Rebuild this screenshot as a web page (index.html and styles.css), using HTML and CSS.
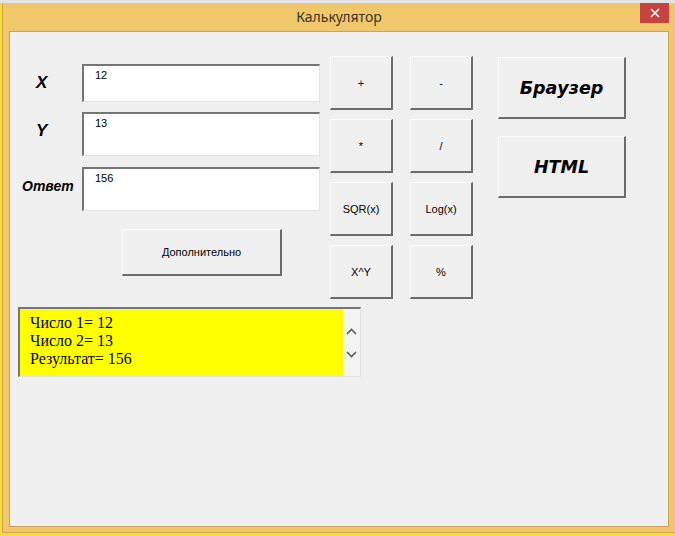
FILE: index.html
```html
<!DOCTYPE html>
<html lang="ru">
<head>
  <meta charset="UTF-8" />
  <title>Калькулятор</title>
  <link rel="stylesheet" href="styles.css">
</head>
<body>
  <div class="desk-strip"></div>
  <div class="window">
    <div class="titlebar">
      <span class="title-spacer"></span>
      <span class="title">Калькулятор</span>
      <span class="close-btn">
        <svg width="10" height="10" viewBox="0 0 10 10"><path d="M1 1 L9 9 M9 1 L1 9" stroke="#fff" stroke-width="1.6" fill="none"/></svg>
      </span>
    </div>

    <div class="client">
      <div class="top-row">
        <div class="left-panel">
          <div class="field-row row-x">
            <span class="label label-short">X</span>
            <div class="textbox">12</div>
          </div>
          <div class="field-row row-y">
            <span class="label label-short">Y</span>
            <div class="textbox">13</div>
          </div>
          <div class="field-row row-answer">
            <span class="label label-long">Ответ</span>
            <div class="textbox">156</div>
          </div>
          <button class="btn more-btn">Дополнительно</button>
        </div>

        <div class="calc-grid">
          <button class="btn">+</button>
          <button class="btn">-</button>
          <button class="btn">*</button>
          <button class="btn">/</button>
          <button class="btn">SQR(x)</button>
          <button class="btn">Log(x)</button>
          <button class="btn">X^Y</button>
          <button class="btn">%</button>
        </div>

        <div class="right-panel">
          <button class="btn big-btn">Браузер</button>
          <button class="btn big-btn">HTML</button>
        </div>
      </div>

      <div class="listbox">
        <div class="list-items">
          <div>Число 1= 12</div>
          <div>Число 2= 13</div>
          <div>Результат= 156</div>
        </div>
        <div class="scrollbar">
          <svg width="17" height="68" viewBox="0 0 17 68">
            <polyline points="4,25 8.5,20.5 13,25" stroke="#5a5a5a" stroke-width="1.6" fill="none"/>
            <polyline points="4,43 8.5,47.5 13,43" stroke="#5a5a5a" stroke-width="1.6" fill="none"/>
          </svg>
        </div>
      </div>
    </div>
  </div>
</body>
</html>
```

FILE: styles.css
```css
body {
  margin: 0;
  width: 675px;
  height: 536px;
  overflow: hidden;
  background-color: #f2df3a;
  font-family: "Liberation Sans", Arial, sans-serif;
}
.desk-strip {
  height: 3px;
  background-color: #e4e4e4;
}
.window {
  margin-left: 2px;
  height: 530px;
  box-sizing: border-box;
  padding: 0 6px 5px 6px;
  background-color: #f1c76c;
  border-left: 1px solid #d6a646;
  border-bottom: 1px solid #d6a646;
  display: flex;
  flex-direction: column;
}
.titlebar {
  height: 28px;
  display: flex;
  align-items: flex-start;
  flex-shrink: 0;
}
.title-spacer {
  width: 29px;
}
.title {
  flex: 1;
  text-align: center;
  font-family: "Noto Sans", "Open Sans", sans-serif;
  font-size: 14px;
  line-height: 28px;
  color: #3b3322;
}
.close-btn {
  width: 29px;
  height: 20px;
  background-color: #c7433f;
  display: flex;
  align-items: center;
  justify-content: center;
}
.client {
  flex: 1;
  background-color: #f0f0f0;
  border: 1px solid #cfa24e;
  padding: 24px 0 0 8px;
}
.top-row {
  display: flex;
  align-items: flex-start;
}
.left-panel {
  width: 302px;
  display: flex;
  flex-direction: column;
}
.field-row {
  display: flex;
  align-items: center;
}
.row-x {
  margin-top: 8px;
  height: 38px;
}
.row-y {
  margin-top: 10px;
  height: 44px;
}
.row-answer {
  margin-top: 11px;
  height: 44px;
}
.label {
  width: 64px;
  box-sizing: border-box;
  padding-bottom: 6px;
  text-align: left;
  font-size: 17px;
  font-weight: bold;
  font-style: italic;
  color: #000;
}
.label-short {
  padding-left: 18px;
}
.label-long {
  padding-left: 4px;
  font-size: 14px;
}
.row-x .label {
  padding-bottom: 0;
}
.textbox {
  flex: 1;
  height: 100%;
  box-sizing: border-box;
  background-color: #fff;
  border-top: 2px solid #767676;
  border-left: 2px solid #767676;
  border-right: 1px solid #e3e3e3;
  border-bottom: 1px solid #e3e3e3;
  padding: 3px 0 0 11px;
  font-size: 11px;
  line-height: 13px;
  color: #000;
}
.btn {
  box-sizing: border-box;
  margin: 0;
  padding: 0;
  background-color: #f0f0f0;
  border-top: 1px solid #fcfcfc;
  border-left: 1px solid #fcfcfc;
  border-right: 2px solid #6c6c6c;
  border-bottom: 2px solid #6c6c6c;
  font-family: "Liberation Sans", Arial, sans-serif;
  font-size: 11px;
  color: #000;
}
.more-btn {
  margin: 18px 0 0 104px;
  width: 160px;
  height: 47px;
}
.calc-grid {
  margin-left: 10px;
  display: grid;
  grid-template-columns: 63px 63px;
  grid-auto-rows: 54px;
  column-gap: 17px;
  row-gap: 9px;
}
.right-panel {
  margin: 1px 0 0 25px;
  width: 128px;
  display: flex;
  flex-direction: column;
  gap: 17px;
}
.big-btn {
  height: 62px;
  font-family: "DejaVu Sans", Verdana, sans-serif;
  font-size: 17.5px;
  font-weight: bold;
  font-style: italic;
}
.listbox {
  margin-top: 8px;
  width: 343px;
  height: 70px;
  box-sizing: border-box;
  display: flex;
  border-top: 2px solid #767676;
  border-left: 2px solid #767676;
  border-right: 1px solid #e3e3e3;
  border-bottom: 1px solid #e3e3e3;
}
.list-items {
  flex: 1;
  background-color: #ffff00;
  padding: 5px 0 0 10px;
  font-family: "Liberation Serif", "Times New Roman", serif;
  font-size: 16px;
  line-height: 18px;
  color: #000;
}
.scrollbar {
  width: 17px;
  background-color: #f3f3f3;
}
```
